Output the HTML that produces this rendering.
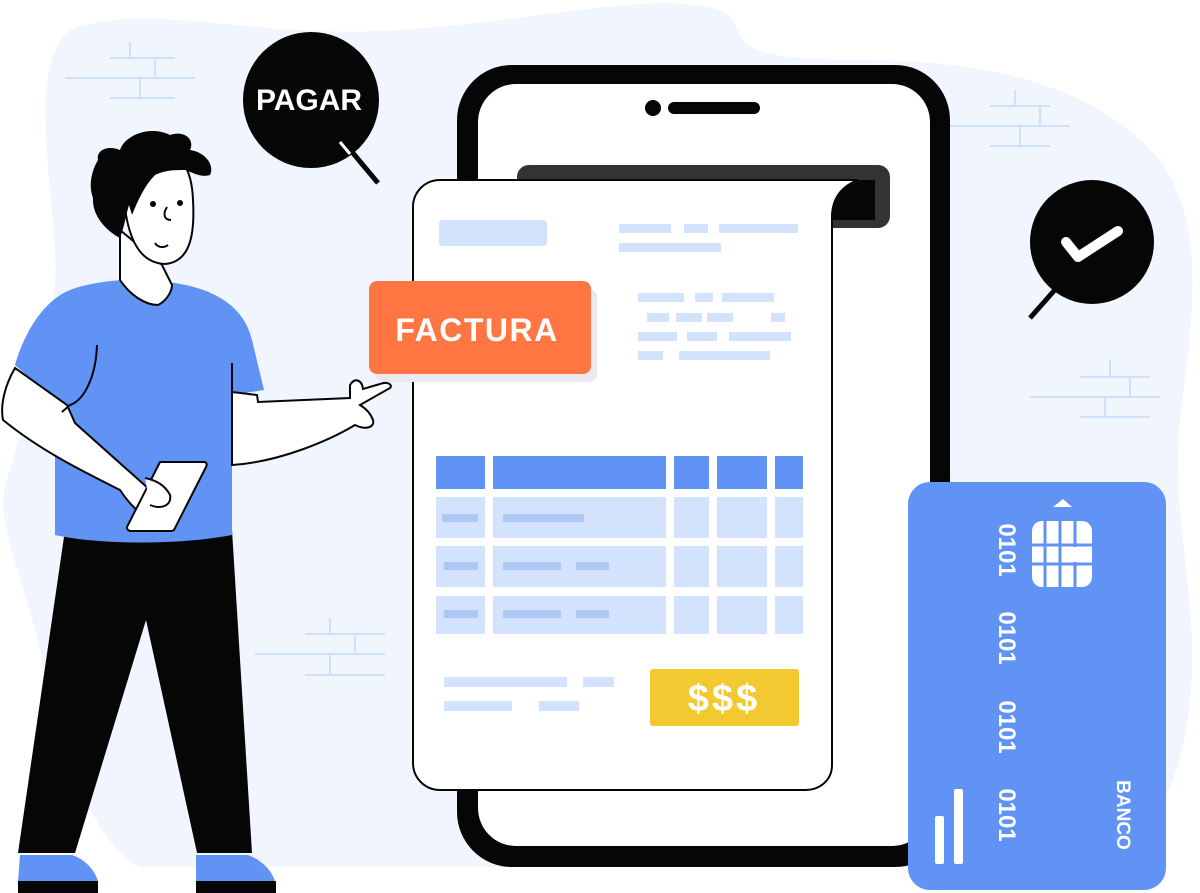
<!DOCTYPE html>
<html><head><meta charset="utf-8"><style>
html,body{margin:0;padding:0;background:#fff;width:1200px;height:893px;overflow:hidden}
svg{display:block}
text{font-family:"Liberation Sans",sans-serif;font-weight:bold}
</style></head><body>
<svg width="1200" height="893" viewBox="0 0 1200 893" xmlns="http://www.w3.org/2000/svg">
<path d="M70 30 C150 0 250 40 400 30 C550 20 650 -10 720 10 C760 30 700 60 860 60 C1000 60 1100 90 1160 160 C1210 230 1190 330 1180 420 C1170 520 1200 600 1190 700 C1180 800 1140 850 1100 867 L140 867 C100 850 60 760 40 650 C20 560 -10 520 10 470 C30 400 60 320 55 250 C50 170 30 60 70 30 Z" fill="#f0f5fe"/>
<g stroke="#cfe0fb" stroke-width="2" fill="none">
<path d="M65 78 H195 M110 58 H175 M110 98 H175 M130 42 V58 M155 58 V78 M140 78 V98"/>
<path d="M950 126 H1070 M990 106 H1050 M990 146 H1050 M1015 90 V106 M1040 106 V126 M1020 126 V146"/>
<path d="M1030 397 H1160 M1080 377 H1150 M1080 417 H1150 M1110 360 V377 M1130 377 V397 M1105 397 V417"/>
<path d="M255 654 H385 M305 634 H385 M305 675 H385 M330 618 V634 M355 634 V654 M330 654 V675"/>
</g>
<circle cx="311" cy="100" r="68" fill="#060606"/>
<path d="M342 140 L378 183" stroke="#060606" stroke-width="5"/>
<path d="M340 142 L350 154" stroke="#fff" stroke-width="3"/>
<text x="309" y="110" font-size="30" fill="#fff" text-anchor="middle">PAGAR</text>
<circle cx="1092" cy="242" r="62" fill="#060606"/>
<path d="M1068 275 L1030 318" stroke="#060606" stroke-width="5"/>
<path d="M1066 242 L1078 257 L1118 231" stroke="#fff" stroke-width="10" fill="none" stroke-linecap="round" stroke-linejoin="round"/>
<rect x="885" y="465" width="70" height="385" rx="20" fill="#f2f2f2"/>
<rect x="457" y="65" width="493" height="802" rx="55" fill="#060606"/>
<rect x="478" y="84" width="452" height="762" rx="38" fill="#fff"/>
<circle cx="653" cy="108" r="8" fill="#060606"/>
<rect x="668" y="102" width="92" height="12" rx="6" fill="#060606"/>
<rect x="517" y="165" width="373" height="63" rx="12" fill="#333"/>
<rect x="530" y="180" width="345" height="40" fill="#060606"/>
<path d="M440 180 H858 C845 185 833 195 832 215 V765 C832 780 820 790 805 790 H440 C425 790 413 778 413 763 V207 C413 192 425 180 440 180 Z" fill="#fff" stroke="#060606" stroke-width="2"/>
<path d="M858 180 C870 180 875 190 875 205 V215 H832 C833 195 845 185 858 180 Z" fill="#060606"/>
<rect x="439" y="220" width="108" height="26" rx="4" fill="#d4e3fd"/>
<g fill="#d4e3fd">
<rect x="619" y="224" width="52" height="9"/><rect x="684" y="224" width="24" height="9"/><rect x="719" y="224" width="79" height="9"/>
<rect x="619" y="243" width="102" height="9"/>
<rect x="638" y="293" width="46" height="9"/><rect x="695" y="293" width="18" height="9"/><rect x="722" y="293" width="52" height="9"/>
<rect x="647" y="313" width="22" height="9"/><rect x="676" y="313" width="26" height="9"/><rect x="707" y="313" width="26" height="9"/><rect x="771" y="313" width="14" height="9"/>
<rect x="638" y="332" width="39" height="9"/><rect x="687" y="332" width="30" height="9"/><rect x="729" y="332" width="62" height="9"/>
<rect x="638" y="351" width="25" height="9"/><rect x="679" y="351" width="91" height="9"/>
</g>
<rect x="375" y="289" width="222" height="93" rx="8" fill="#e9e9ef"/>
<rect x="369" y="281" width="222" height="93" rx="8" fill="#ff7643"/>
<text x="477" y="341" font-size="32" fill="#fff" text-anchor="middle" letter-spacing="1.5">FACTURA</text>
<g fill="#6193f5">
<rect x="436" y="456" width="49" height="33"/><rect x="493" y="456" width="173" height="33"/><rect x="674" y="456" width="35" height="33"/><rect x="717" y="456" width="50" height="33"/><rect x="775" y="456" width="28" height="33"/>
</g>
<g fill="#d4e3fd">
<rect x="436" y="497" width="49" height="41"/><rect x="493" y="497" width="173" height="41"/><rect x="674" y="497" width="35" height="41"/><rect x="717" y="497" width="50" height="41"/><rect x="775" y="497" width="28" height="41"/>
<rect x="436" y="546" width="49" height="41"/><rect x="493" y="546" width="173" height="41"/><rect x="674" y="546" width="35" height="41"/><rect x="717" y="546" width="50" height="41"/><rect x="775" y="546" width="28" height="41"/>
<rect x="436" y="596" width="49" height="38"/><rect x="493" y="596" width="173" height="38"/><rect x="674" y="596" width="35" height="38"/><rect x="717" y="596" width="50" height="38"/><rect x="775" y="596" width="28" height="38"/>
</g>
<g fill="#aec8f5">
<rect x="442" y="514" width="36" height="8"/><rect x="503" y="514" width="81" height="8"/>
<rect x="444" y="562" width="34" height="8"/><rect x="503" y="562" width="58" height="8"/><rect x="576" y="562" width="33" height="8"/>
<rect x="444" y="610" width="34" height="8"/><rect x="503" y="610" width="58" height="8"/><rect x="576" y="610" width="33" height="8"/>
</g>
<g fill="#d4e3fd">
<rect x="444" y="677" width="123" height="10"/><rect x="583" y="677" width="31" height="10"/>
<rect x="444" y="701" width="68" height="10"/><rect x="539" y="701" width="40" height="10"/>
</g>
<rect x="650" y="669" width="149" height="57" rx="3" fill="#f2c930"/>
<text x="724" y="711" font-size="38" fill="#fff" text-anchor="middle" font-weight="normal" letter-spacing="3">$$$</text>
<rect x="908" y="482" width="258" height="408" rx="22" fill="#6193f5"/>
<path d="M1053 507 L1063 499 L1072 507 Z" fill="#fff"/>
<rect x="1032" y="521" width="60" height="66" rx="10" fill="#fff"/>
<g stroke="#6193f5" stroke-width="3">
<path d="M1045 521 V587 M1060 521 V587 M1075 521 V587 M1032 545 H1092 M1032 564 H1092"/>
</g>
<rect x="1062" y="547" width="30" height="15" fill="#fff"/>
<g fill="#fff" font-size="24">
<text transform="translate(999,550) rotate(90)" text-anchor="middle">0101</text>
<text transform="translate(999,638) rotate(90)" text-anchor="middle">0101</text>
<text transform="translate(999,727) rotate(90)" text-anchor="middle">0101</text>
<text transform="translate(999,815) rotate(90)" text-anchor="middle">0101</text>
<text transform="translate(1117,815) rotate(90)" text-anchor="middle" font-size="19">BANCO</text>
</g>
<rect x="935" y="816" width="9" height="48" rx="2" fill="#fff"/>
<rect x="954" y="789" width="9" height="75" rx="2" fill="#fff"/>
<path d="M65 530 L232 530 L252 853 L197 853 L146 620 L75 853 L18 853 Z" fill="#060606"/>
<path d="M20 855 H72 C88 860 97 875 98 882 H18 Z" fill="#6193f5"/>
<rect x="18" y="881" width="80" height="12" fill="#060606"/>
<path d="M196 855 H248 C262 860 273 872 275 882 H196 Z" fill="#6193f5"/>
<rect x="196" y="881" width="80" height="12" fill="#060606"/>
<path d="M55 535 L55 400 L15 365 C25 330 45 300 70 290 C90 282 120 280 125 280 L175 283 C220 290 245 310 252 340 L264 390 L232 395 L232 535 C180 545 100 545 55 535 Z" fill="#6193f5"/>
<path d="M258 402 L257 395 L232 392 L232 465 C280 462 330 440 355 425 C365 430 375 428 373 420 C370 412 365 408 360 405 L390 388 C393 385 388 381 380 384 L363 389 C362 380 355 377 350 385 L350 398 Z" fill="#fff" stroke="#060606" stroke-width="2"/>
<path d="M232 363 V398" stroke="#060606" stroke-width="2"/>
<path d="M15 368 C5 385 0 405 3 420 C40 450 80 470 120 490 C130 505 140 515 155 520 C168 520 172 508 165 500 L150 490 L75 423 L67 405 Z" fill="#fff" stroke="#060606" stroke-width="2"/>
<path d="M97 345 C96 375 85 400 70 405 L62 412" stroke="#060606" stroke-width="2" fill="none"/>
<path d="M160 462 L205 462 C207 463 207 465 206 467 L175 528 C174 531 172 531 170 531 L130 531 C127 530 126 528 128 525 Z" fill="#fff" stroke="#060606" stroke-width="2"/>
<path d="M145 478 C155 480 165 485 170 495 C172 505 162 510 150 505" fill="#fff" stroke="#060606" stroke-width="2"/>
<path d="M120 230 L120 280 C130 295 145 305 158 305 C168 300 172 290 172 285 L162 265 Z" fill="#fff" stroke="#060606" stroke-width="2"/>
<path d="M124 200 C120 170 132 155 160 152 C185 152 192 175 193 200 C195 235 190 262 165 264 C140 263 128 240 124 200 Z" fill="#fff" stroke="#060606" stroke-width="2"/>
<path d="M120 238 C105 230 92 215 93 198 C88 185 92 170 98 160 C96 150 108 145 120 150 C125 135 150 125 170 135 C185 130 195 140 190 150 C205 152 215 165 210 175 C200 178 192 172 185 170 C175 170 165 170 155 175 C145 185 138 200 132 215 L129 205 C126 215 124 228 120 238 Z" fill="#060606"/>
<circle cx="153" cy="204" r="3" fill="#060606"/>
<circle cx="180" cy="203" r="3" fill="#060606"/>
<path d="M167 207 C162 215 165 220 171 220" stroke="#060606" stroke-width="2" fill="none"/>
<path d="M155 243 C158 248 164 248 168 245" stroke="#060606" stroke-width="2" fill="none"/>
</svg>
</body></html>
